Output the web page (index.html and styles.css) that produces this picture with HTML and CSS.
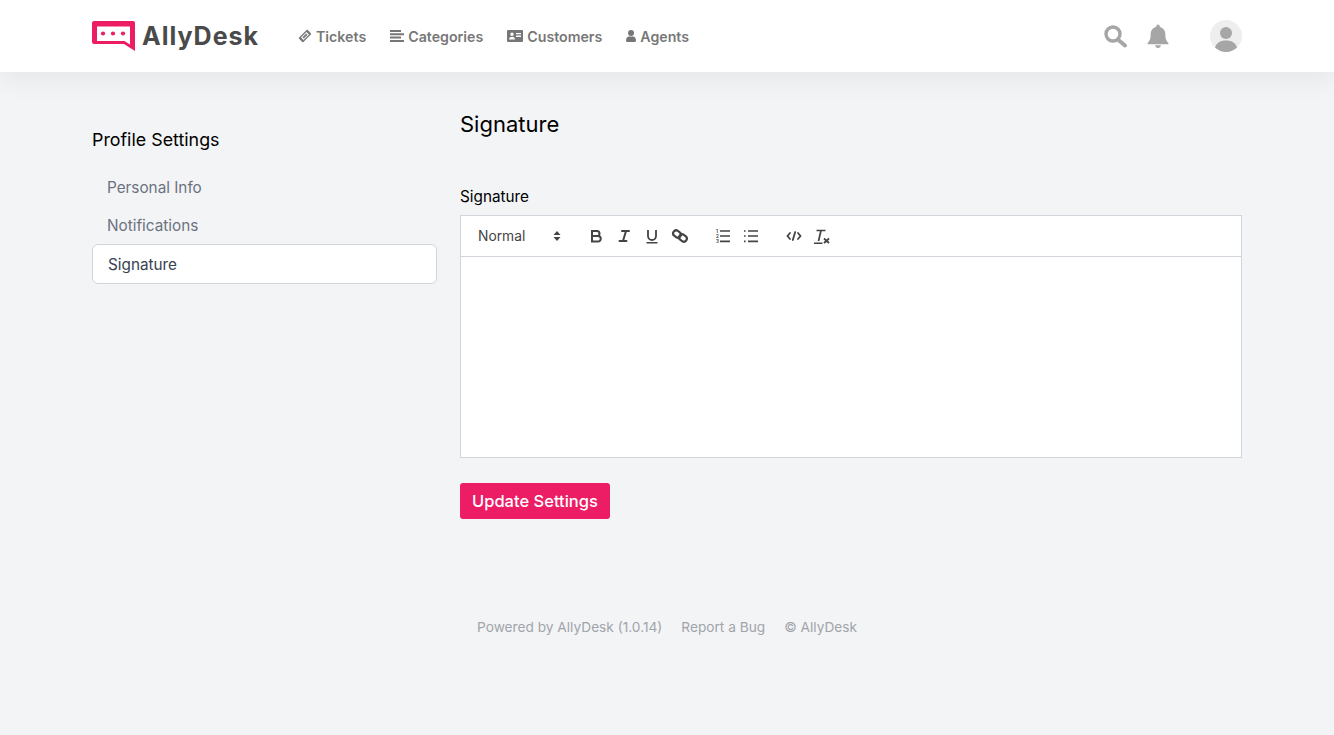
FILE: index.html
```html
<!DOCTYPE html>
<html lang="en">
<head>
    <meta charset="UTF-8">
    <meta name="viewport" content="width=device-width, initial-scale=1.0">
    <title>AllyDesk - Signature</title>
    <link rel="stylesheet" href="styles.css">
</head>
<body>
    <!-- Top navigation -->
    <header class="topbar">
        <div class="topbar-inner">
            <a class="logo" href="#">
                <svg class="logo-mark" width="43" height="30" viewBox="0 0 43 30">
                    <path fill="#ec1c65" d="M2 0H41a2 2 0 0 1 2 2V30L32 23H2a2 2 0 0 1-2-2V2a2 2 0 0 1 2-2Z"/>
                    <path fill="#fff" d="M5 5.500H38V23.500L32.500 20H5Z"/>
                    <circle cx="11" cy="12.500" r="2.100" fill="#ec1c65"/>
                    <circle cx="21" cy="12.500" r="2.100" fill="#ec1c65"/>
                    <circle cx="31" cy="12.500" r="2.100" fill="#ec1c65"/>
                </svg>
                <span class="logo-text">AllyDesk</span>
            </a>
            <nav class="nav">
                <a class="nav-link" href="#">
                    <svg width="14" height="14" viewBox="-1 -1 16 16"><g transform="rotate(-45 7 7)"><rect x="0" y="3.500" width="14" height="7" rx="1" fill="#777"/><rect x="2.500" y="5" width="9" height="4" fill="#fff"/><rect x="4" y="5.900" width="6" height="2.200" fill="#777"/></g></svg>
                    Tickets
                </a>
                <a class="nav-link" href="#">
                    <svg width="14" height="12" viewBox="0 0 14 12"><path fill="#777" d="M0 0h11v2H0ZM0 3.300h14v2H0ZM0 6.600h11v2H0ZM0 9.900h14V12H0Z"/></svg>
                    Categories
                </a>
                <a class="nav-link" href="#">
                    <svg width="16" height="12" viewBox="0 0 16 12"><path fill="#777" fill-rule="evenodd" d="M1 0h14a1 1 0 0 1 1 1v10a1 1 0 0 1-1 1H1a1 1 0 0 1-1-1V1a1 1 0 0 1 1-1ZM9 3v1.300h5V3ZM9 5.600v1.300h5V5.600ZM5 2.500a1.700 1.700 0 1 0 0 3.400 1.700 1.700 0 0 0 0-3.400ZM2 9.500h6c0-1.600-1-2.800-3-2.800S2 7.900 2 9.500Z"/></svg>
                    Customers
                </a>
                <a class="nav-link" href="#">
                    <svg width="10" height="12" viewBox="0 0 10 12"><circle cx="5" cy="3" r="3" fill="#777"/><path fill="#777" d="M0 10.500C0 8 1.500 6.500 3 6.500h4c1.500 0 3 1.500 3 4a1.500 1.500 0 0 1-1.500 1.500h-7A1.500 1.500 0 0 1 0 10.500Z"/></svg>
                    Agents
                </a>
            </nav>
            <div class="topbar-right">
                <svg class="search-icon" width="24" height="24" viewBox="0 0 24 24"><circle cx="9" cy="10" r="7" fill="none" stroke="#a6a6a6" stroke-width="3.400"/><path stroke="#a6a6a6" stroke-width="3.800" stroke-linecap="round" d="M15 16.500 21 21.500"/></svg>
                <svg class="bell-icon" width="22" height="24" viewBox="0 0 24 25"><path fill="#a6a6a6" d="M12 0a2 2 0 0 1 2 2v.700c3.500.8 6 3.800 6 7.500 0 6 1.500 7.800 3.200 9.600.5.600.2 1.700-.8 1.700H1.600c-1 0-1.300-1.100-.8-1.700C2.500 18 4 16.200 4 10.200c0-3.700 2.500-6.700 6-7.500V2a2 2 0 0 1 2-2Z"/><path fill="#a6a6a6" d="M9 22.500h6a3 3 0 0 1-6 0Z"/></svg>
                <div class="avatar">
                    <svg width="32" height="32" viewBox="0 0 32 32"><circle cx="16" cy="13" r="6" fill="#a6a6a6"/><path fill="#a6a6a6" d="M5 28c1-5 5-7.500 11-7.500S26 23 27 28a16 16 0 0 1-22 0Z"/></svg>
                </div>
            </div>
        </div>
    </header>

    <div class="page">
        <!-- Settings menu -->
        <aside class="sidebar">
            <h2 class="sidebar-title">Profile Settings</h2>
            <a class="side-link" href="#">Personal Info</a>
            <a class="side-link" href="#">Notifications</a>
            <a class="side-link active" href="#">Signature</a>
        </aside>

        <main class="content">
            <h1 class="content-title">Signature</h1>
            <label class="field-label">Signature</label>
            <div class="editor">
                <div class="toolbar">
                    <div class="format-select">
                        Normal
                        <svg width="8" height="12" viewBox="0 0 8 12"><path fill="#444" d="M4 1l3.500 4h-7ZM4 11 .5 7h7Z"/></svg>
                    </div>
                    <div class="tool-group group-text">
                        <svg width="18" height="18" viewBox="0 0 18 18"><path fill="none" stroke="#444" stroke-width="2" d="M5 4h5a2.500 2.500 0 0 1 0 5H5ZM5 9h6a2.700 2.700 0 0 1 0 5.500H5Z"/></svg>
                        <svg width="18" height="18" viewBox="0 0 18 18"><path fill="none" stroke="#444" stroke-width="2" stroke-linecap="round" d="M7 4h7M4.500 14h7M11 4 8 14"/></svg>
                        <svg width="18" height="18" viewBox="0 0 18 18"><path fill="none" stroke="#444" stroke-width="1.800" d="M5 3v6a4 4 0 0 0 8 0V3"/><path fill="#444" d="M3.500 15h11v1.500h-11Z"/></svg>
                        <svg width="18" height="18" viewBox="0 0 18 18"><g fill="none" stroke="#444" stroke-width="2.200"><rect x="2" y="4" width="8" height="6" rx="3" transform="rotate(35 6 7)"/><rect x="8" y="8" width="8" height="6" rx="3" transform="rotate(35 12 11)"/></g></svg>
                    </div>
                    <div class="tool-group group-list">
                        <svg width="18" height="18" viewBox="0 0 18 18"><path fill="none" stroke="#444" stroke-width="1.700" d="M6 4h10M6 9h10M6 14.300h10"/><text x="2" y="5.500" class="list-num">1</text><text x="2" y="10.500" class="list-num">2</text><text x="2" y="16" class="list-num">3</text></svg>
                        <svg width="18" height="18" viewBox="0 0 18 18"><path fill="none" stroke="#444" stroke-width="1.700" d="M6 4h10M6 9h10M6 14.300h10M2 4h1.600M2 9h1.600M2 14.300h1.600"/></svg>
                    </div>
                    <div class="tool-group group-misc">
                        <svg width="18" height="18" viewBox="0 0 18 18"><path fill="none" stroke="#444" stroke-width="1.800" stroke-linecap="round" d="M5 6 2.500 9 5 12M13 6l2.500 3L13 12M10.200 5 7.800 13"/></svg>
                        <svg width="18" height="18" viewBox="0 0 18 18"><path fill="none" stroke="#444" stroke-width="1.700" d="M3.500 3.500h9M8 3.500 5.500 14"/><path fill="#444" d="M1 15.500h8.500V17H1Z"/><path fill="none" stroke="#444" stroke-width="1.800" d="M11 11.500l5 4.500M16 11.500l-5 4.500"/></svg>
                    </div>
                </div>
                <div class="editor-body"></div>
            </div>
            <button class="btn-primary" type="button">Update Settings</button>
        </main>
    </div>

    <footer class="footer">
        <a href="#">Powered by AllyDesk (1.0.14)</a>
        <a href="#">Report a Bug</a>
        <a href="#">© AllyDesk</a>
    </footer>
</body>
</html>
```

FILE: styles.css
```css
body {
    font-family: 'Inter', 'Liberation Sans', sans-serif;
    background-color: #f3f4f6;
    margin: 0;
    color: #000;
}

a {
    text-decoration: none;
}

.topbar {
    height: 72px;
    background-color: #fff;
    box-shadow: 0 10px 25px rgba(0, 0, 0, 0.05);
}

.topbar-inner {
    display: flex;
    align-items: center;
    height: 100%;
    margin: 0 92px;
}

.logo {
    display: flex;
    align-items: center;
    gap: 7px;
    width: 206px;
}

.logo-text {
    font-size: 25px;
    font-weight: 700;
    letter-spacing: 1px;
    color: #4a4a4a;
}

.nav {
    display: flex;
    gap: 24px;
}

.nav-link {
    display: flex;
    align-items: center;
    gap: 4px;
    font-size: 14.2px;
    font-weight: 600;
    color: #777;
}

.topbar-right {
    display: flex;
    align-items: center;
    margin-left: auto;
}

.bell-icon {
    margin-left: 19px;
}

.avatar {
    width: 32px;
    height: 32px;
    margin-left: 41px;
    border-radius: 50%;
    background-color: #eee;
    overflow: hidden;
}

.page {
    display: flex;
    gap: 23px;
    margin: 0 92px;
}

.sidebar {
    width: 345px;
    padding-top: 57px;
}

.sidebar-title {
    margin: 0 0 17px;
    font-size: 17.85px;
    line-height: 22px;
    font-weight: 400;
}

.side-link {
    display: block;
    height: 38px;
    padding-left: 15px;
    font-size: 15.3px;
    line-height: 40px;
    color: #6b7280;
}

.side-link.active {
    box-sizing: border-box;
    height: 40px;
    border: 1px solid #d1d5db;
    border-radius: 6px;
    background-color: #fff;
    color: #374151;
}

.content {
    flex: 1;
    padding-top: 38px;
}

.content-title {
    margin: 0 0 47px;
    font-size: 22px;
    line-height: 28px;
    font-weight: 400;
}

.field-label {
    display: block;
    margin-bottom: 6px;
    font-size: 15.3px;
    line-height: 24px;
}

.editor {
    border: 1px solid #d1d5db;
    background-color: #fff;
}

.toolbar {
    display: flex;
    align-items: center;
    height: 40px;
    border-bottom: 1px solid #d1d5db;
    font-size: 13.8px;
    color: #444;
}

.format-select {
    display: flex;
    align-items: center;
    justify-content: space-between;
    width: 83px;
    margin-left: 17px;
}

.tool-group {
    display: flex;
    gap: 10px;
}

.group-text {
    margin-left: 26px;
}

.group-list {
    margin-left: 25px;
}

.group-misc {
    margin-left: 25px;
}

.list-num {
    font-size: 4.5px;
    font-weight: 700;
    fill: #444;
}

.editor-body {
    height: 200px;
}

.btn-primary {
    display: block;
    height: 36px;
    margin-top: 25px;
    padding: 0 12px;
    border: none;
    border-radius: 3px;
    background-color: #ec1c65;
    color: #fff;
    font-family: inherit;
    font-size: 16.5px;
    font-weight: 500;
    cursor: pointer;
}

.footer {
    display: flex;
    gap: 19px;
    margin: 98px 0 0 477px;
    font-size: 13.7px;
    line-height: 20px;
}

.footer a {
    color: #a1a4aa;
}
```
